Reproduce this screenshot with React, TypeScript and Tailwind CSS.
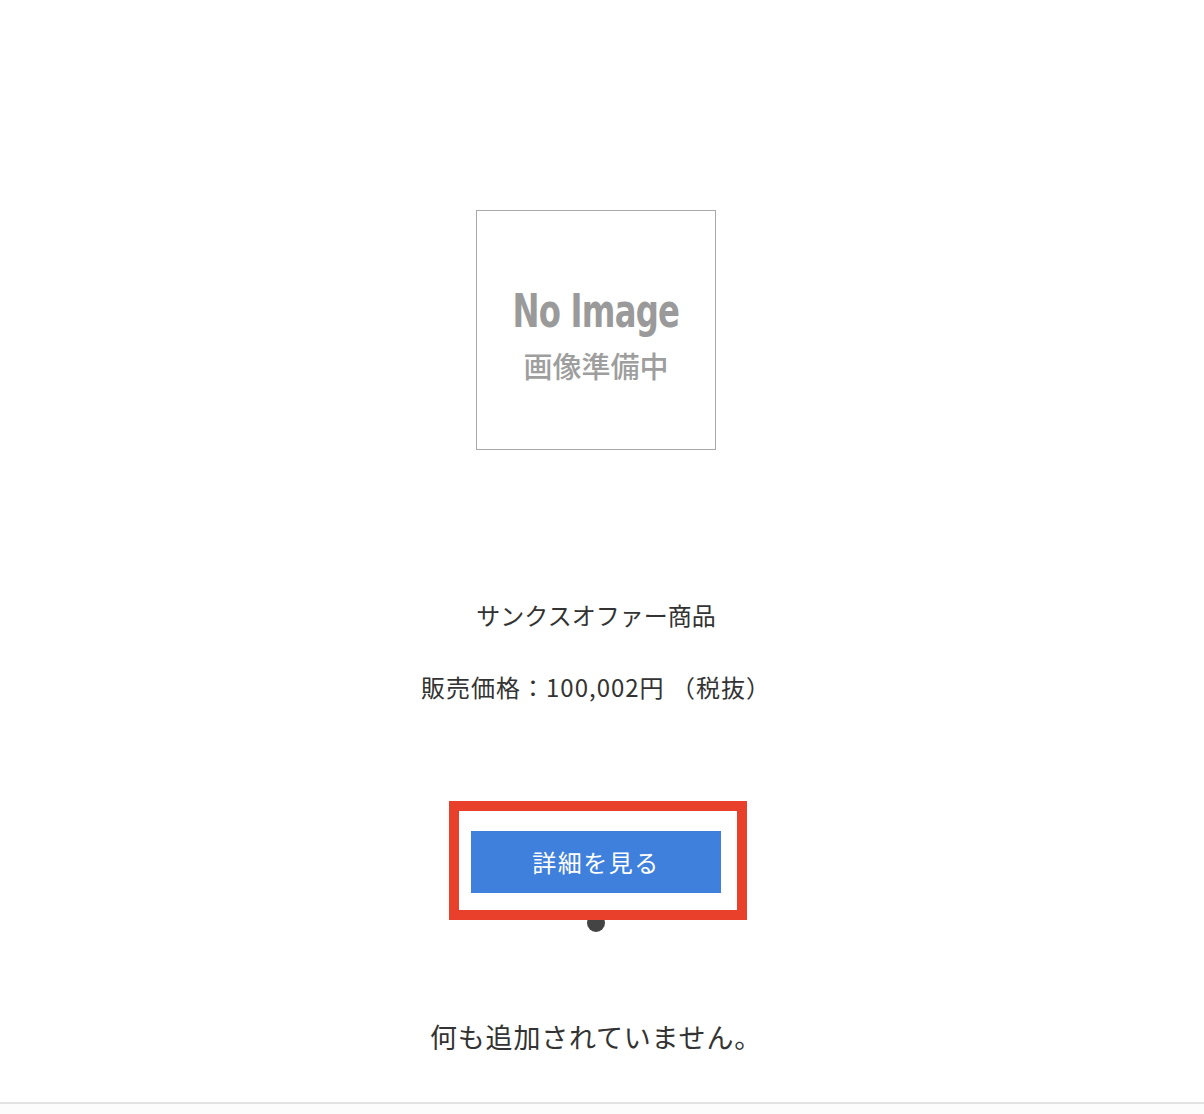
import React from "react";

export default function App() {
  return (
    <div
      className="relative flex min-h-[1114px] w-full flex-col bg-white text-[#333]"
      style={{ fontFamily: '"Noto Sans CJK JP", "Noto Sans", sans-serif' }}
    >
      <div className="flex flex-1 flex-col items-center pr-[12px]">
        <div className="mt-[210px] flex h-[240px] w-[240px] flex-col items-center justify-center border border-[#a8a8a8]">
          <div
            className="mt-[8px] text-[46px] font-bold leading-none tracking-[-1px] text-[#9a9a9a]"
            style={{ fontFamily: '"DejaVu Sans", sans-serif', fontStretch: "condensed" }}
          >
            <span className="inline-block scale-x-[0.78]">No Image</span>
          </div>
          <div className="mt-[17px] text-[29px] font-medium leading-none text-[#9e9e9e]">
            画像準備中
          </div>
        </div>

        <div className="mt-[149px] text-[24px] leading-[32px]">
          サンクスオファー商品
        </div>
        <div className="mt-[40px] text-[24px] leading-[32px] tracking-[1px]">
          販売価格：100,002円 （税抜）
        </div>

        <div className="relative mt-[128px]">
          <button className="flex h-[62px] w-[250px] items-center justify-center bg-[#3f80dc] text-[24px] tracking-[1.5px] text-white">
            詳細を見る
          </button>
        </div>
        <div className="relative z-0 mt-[21px] h-[18px] w-[18px] rounded-full bg-[#444]" />

        <div className="mt-[87px] text-[27px] leading-[36px] tracking-[0.8px] text-[#333]">
          何も追加されていません。
        </div>
      </div>

      <div className="pointer-events-none absolute left-[449px] top-[801px] z-10 h-[119px] w-[298px] border-[10px] border-[#e8402a]" />

      <div className="mt-[30px] h-[2px] w-full bg-[#e2e2e2]" />
      <div className="h-[10px] w-full bg-[#fcfcfc]" />
    </div>
  );
}
